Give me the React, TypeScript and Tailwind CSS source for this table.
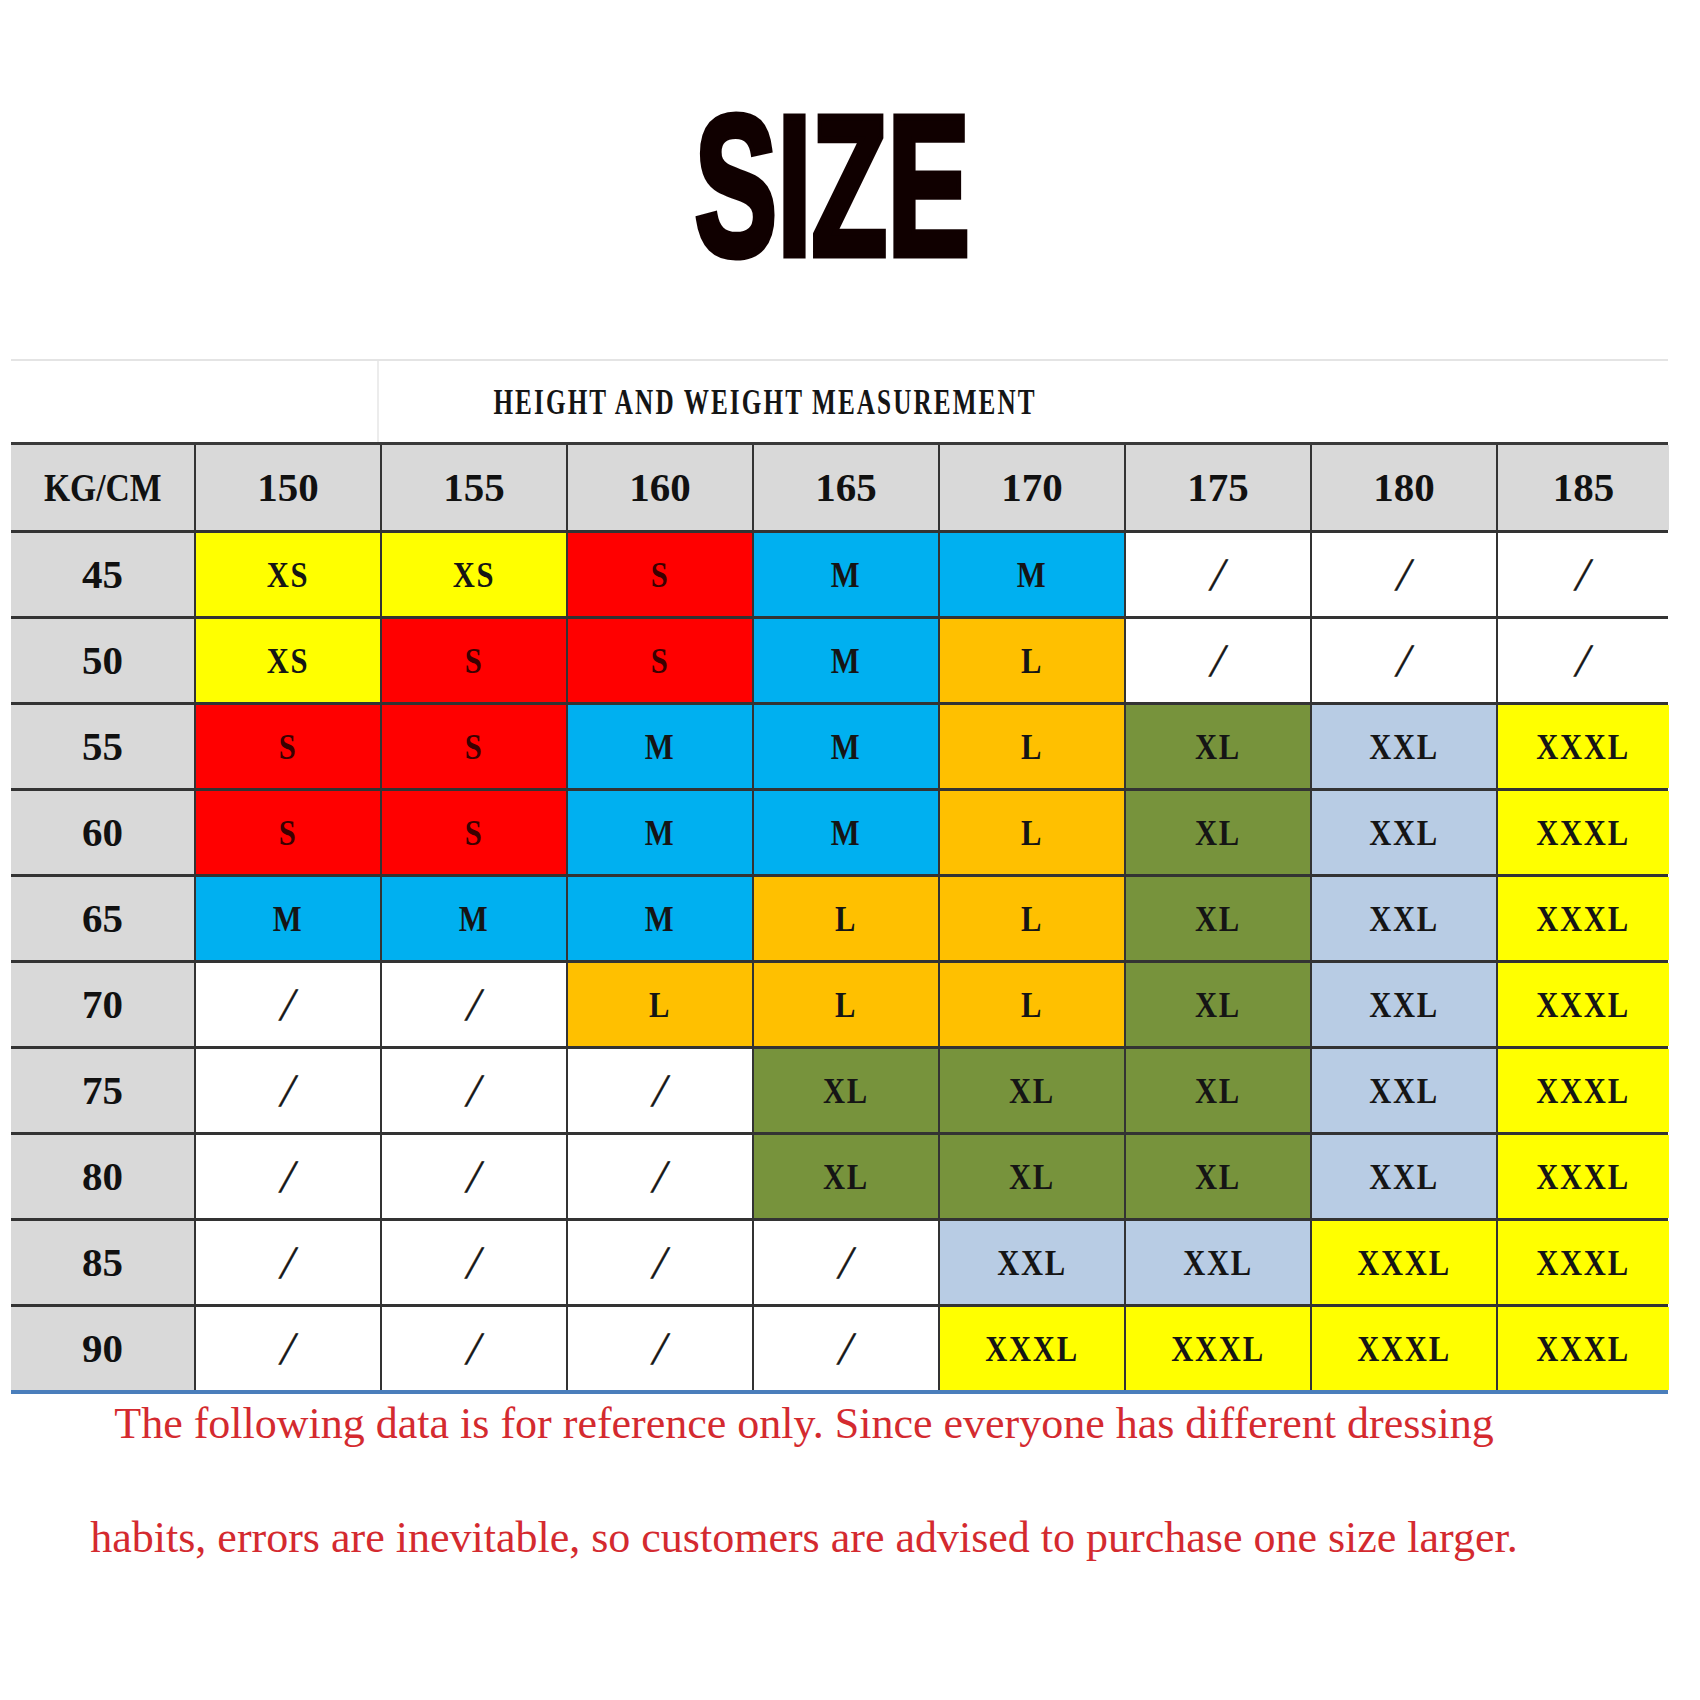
const heights = ["150", "155", "160", "165", "170", "175", "180", "185"];

const rows: { kg: string; sizes: string[] }[] = [
  { kg: "45", sizes: ["XS", "XS", "S", "M", "M", "/", "/", "/"] },
  { kg: "50", sizes: ["XS", "S", "S", "M", "L", "/", "/", "/"] },
  { kg: "55", sizes: ["S", "S", "M", "M", "L", "XL", "XXL", "XXXL"] },
  { kg: "60", sizes: ["S", "S", "M", "M", "L", "XL", "XXL", "XXXL"] },
  { kg: "65", sizes: ["M", "M", "M", "L", "L", "XL", "XXL", "XXXL"] },
  { kg: "70", sizes: ["/", "/", "L", "L", "L", "XL", "XXL", "XXXL"] },
  { kg: "75", sizes: ["/", "/", "/", "XL", "XL", "XL", "XXL", "XXXL"] },
  { kg: "80", sizes: ["/", "/", "/", "XL", "XL", "XL", "XXL", "XXXL"] },
  { kg: "85", sizes: ["/", "/", "/", "/", "XXL", "XXL", "XXXL", "XXXL"] },
  { kg: "90", sizes: ["/", "/", "/", "/", "XXXL", "XXXL", "XXXL", "XXXL"] },
];

const cellColor: Record<string, string> = {
  XS: "bg-[#ffff00] text-[#151515]",
  S: "bg-[#ff0000] text-[#3a0000]",
  M: "bg-[#00b0f0] text-[#151515]",
  L: "bg-[#ffc000] text-[#151515]",
  XL: "bg-[#77933c] text-[#151515]",
  XXL: "bg-[#b8cce4] text-[#151515]",
  XXXL: "bg-[#ffff00] text-[#151515]",
  "/": "bg-white text-[#151515]",
};

const serif = "font-['Liberation_Serif',serif]";

function SizeCell({ size }: { size: string }) {
  if (size === "/") {
    return (
      <div className={`${cellColor[size]} flex items-center justify-center`}>
        <span className={`${serif} inline-block skew-x-[-12deg] text-[46px] leading-none [-webkit-text-stroke:0.6px_#151515]`}>/</span>
      </div>
    );
  }
  return (
    <div className={`${cellColor[size]} flex items-center justify-center`}>
      <span className={`${serif} inline-block scale-x-[0.85] text-[36px] leading-none font-bold tracking-[2px]`}>{size}</span>
    </div>
  );
}

export default function App() {
  return (
    <div className="min-h-[1700px] w-[1700px] bg-white">
      {/* Title */}
      <div className="flex justify-center pt-[86px] pr-[36px]">
        <span className="inline-block scale-x-[0.62] font-['Liberation_Sans',sans-serif] text-[200px] leading-none font-bold text-[#100000] [-webkit-text-stroke:7px_#100000]">
          SIZE
        </span>
      </div>

      {/* Chart */}
      <div className="mt-[73px] ml-[11px] w-[1657px]">
        <div className="flex h-[83px] border-t-2 border-[#e4e4e4]">
          <div className="w-[368px] shrink-0 border-r-2 border-[#ececec]" />
          <div className="flex w-[772px] shrink-0 items-center justify-center">
            <span className={`${serif} inline-block shrink-0 scale-x-[0.7] text-[36px] leading-none font-bold tracking-[3px] whitespace-nowrap text-[#151515]`}>
              HEIGHT AND WEIGHT MEASUREMENT
            </span>
          </div>
        </div>

        <div className="grid grid-cols-[183px_repeat(7,184px)_171px] grid-rows-[85px_repeat(10,83px)] gap-x-[2px] gap-y-[3px] border-t-[3px] border-b-4 border-t-[#3a3a3a] border-b-[#4a7ebb] bg-[#333333]">
          <div className="flex items-center justify-center bg-[#d9d9d9]">
            <span className={`${serif} inline-block scale-x-[0.82] text-[41px] leading-none font-bold text-[#111]`}>KG/CM</span>
          </div>
          {heights.map((h) => (
            <div key={h} className="flex items-center justify-center bg-[#d9d9d9]">
              <span className={`${serif} text-[41px] leading-none font-bold text-[#111]`}>{h}</span>
            </div>
          ))}
          {rows.map((r) => (
            <>
              <div key={r.kg} className="flex items-center justify-center bg-[#d9d9d9]">
                <span className={`${serif} text-[41px] leading-none font-bold text-[#111]`}>{r.kg}</span>
              </div>
              {r.sizes.map((s, i) => (
                <SizeCell key={r.kg + "-" + i} size={s} />
              ))}
            </>
          ))}
        </div>
      </div>

      {/* Note */}
      <div className={`${serif} mt-[8px] w-[1608px] text-center text-[44px] text-[#d42a2f]`}>
        <p className="leading-none">
          The following data is for reference only. Since everyone has different dressing
        </p>
        <p className="mt-[70px] leading-none">
          habits, errors are inevitable, so customers are advised to purchase one size larger.
        </p>
      </div>
    </div>
  );
}
